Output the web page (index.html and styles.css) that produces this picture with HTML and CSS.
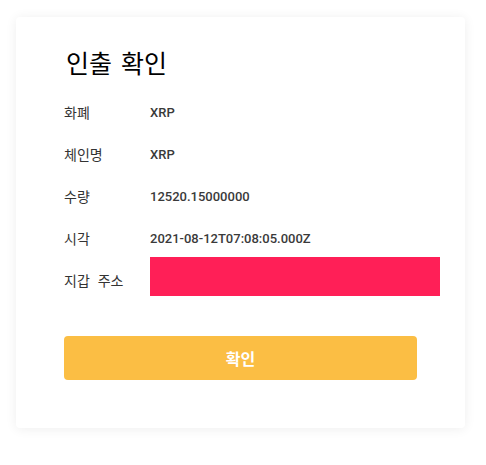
FILE: index.html
```html
<!DOCTYPE html>
<html lang="ko">
<head>
  <meta charset="UTF-8">
  <meta name="viewport" content="width=device-width, initial-scale=1.0">
  <title>인출 확인</title>
  <link rel="stylesheet" href="styles.css">
</head>
<body>
  <div class="page">
    <div class="confirm-card">
      <h2 class="confirm-title">인출 확인</h2>

      <div class="info-list">
        <div class="info-row">
          <span class="info-label">화폐</span>
          <span class="info-value">XRP</span>
        </div>
        <div class="info-row">
          <span class="info-label">체인명</span>
          <span class="info-value">XRP</span>
        </div>
        <div class="info-row">
          <span class="info-label">수량</span>
          <span class="info-value">12520.15000000</span>
        </div>
        <div class="info-row">
          <span class="info-label">시각</span>
          <span class="info-value">2021-08-12T07:08:05.000Z</span>
        </div>
        <div class="info-row address-row">
          <span class="info-label">지갑 주소</span>
          <span class="info-value redacted"></span>
        </div>
      </div>

      <button class="confirm-btn">확인</button>
    </div>
  </div>
</body>
</html>
```

FILE: styles.css
```css
body {
  margin: 0;
  background-color: #fff;
  font-family: "Noto Sans CJK KR", "Noto Sans", sans-serif;
}

.page {
  padding: 17px 21px 37px 16px;
}

.confirm-card {
  box-sizing: border-box;
  width: 449px;
  padding: 29px 48px 48px;
  background-color: #fff;
  border-radius: 4px;
  box-shadow: 0 1px 12px rgba(0, 0, 0, 0.07);
}

.confirm-title {
  margin: 0 0 13px 2px;
  font-size: 25px;
  font-weight: 400;
  line-height: 32px;
  word-spacing: 2px;
  color: #000;
}

.info-row {
  display: flex;
  align-items: center;
  height: 42px;
}

.info-label {
  width: 86px;
  flex-shrink: 0;
  font-size: 14px;
  word-spacing: 4px;
  color: #333;
}

.info-value {
  font-family: Roboto, "Liberation Sans", sans-serif;
  font-size: 13px;
  font-weight: 500;
  color: #3a3a3a;
}

.address-row {
  align-items: flex-start;
}

.address-row .info-label {
  line-height: 42px;
}

.redacted {
  flex-shrink: 0;
  width: 290px;
  height: 39px;
  margin-top: -2px;
  background-color: #ff1f57;
}

.confirm-btn {
  display: block;
  width: 353px;
  height: 44px;
  margin-top: 35px;
  border: 0;
  border-radius: 4px;
  background-color: #fbbe44;
  color: #fff;
  font-family: "Noto Sans CJK KR", sans-serif;
  font-size: 16px;
  font-weight: 700;
  cursor: pointer;
}
```
